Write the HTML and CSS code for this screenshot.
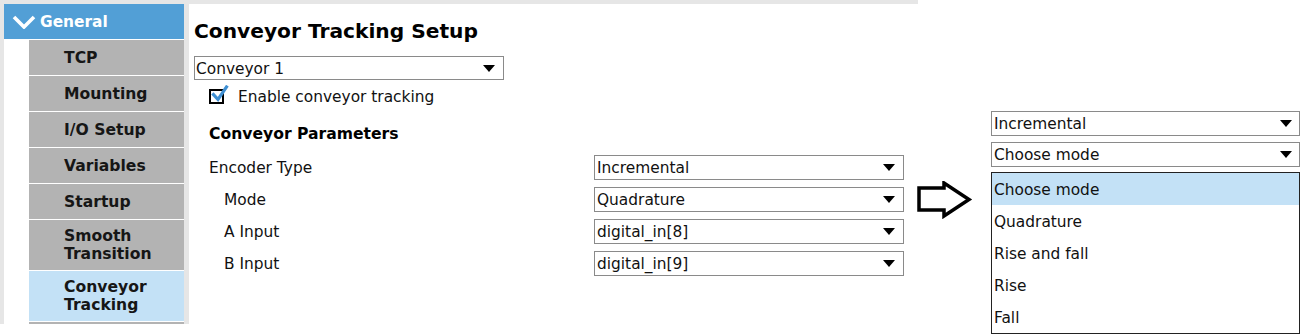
FILE: index.html
```html
<!DOCTYPE html>
<html>
<head>
<meta charset="utf-8">
<link rel="stylesheet" href="styles.css">
</head>
<body>
<div class="page">
  <div class="frame">
    <nav class="sidebar">
      <div class="nav-head">
        <svg class="chev" width="24" height="14" viewBox="0 0 24 14"><path d="M2 2 L12 12 L22 2" fill="none" stroke="#fff" stroke-width="3.6" stroke-linejoin="miter"/></svg>
        <span>General</span>
      </div>
      <div class="nav-item">TCP</div>
      <div class="nav-item">Mounting</div>
      <div class="nav-item">I/O Setup</div>
      <div class="nav-item">Variables</div>
      <div class="nav-item">Startup</div>
      <div class="nav-item tall">Smooth<br>Transition</div>
      <div class="nav-item tall active">Conveyor<br>Tracking</div>
      <div class="nav-item"></div>
    </nav>
    <main class="content">
      <h1 class="title">Conveyor Tracking Setup</h1>
      <div class="dd dd-conv"><span>Conveyor 1</span><i class="tri"></i></div>
      <div class="check-row">
        <span class="box">
          <svg class="tick" width="20" height="20" viewBox="0 0 20 20"><path d="M3.5 9.5 L8 14.5 L16.5 2" fill="none" stroke="#3f8fd2" stroke-width="3.2" stroke-linecap="square"/></svg>
        </span>
        <span class="check-label">Enable conveyor tracking</span>
      </div>
      <h2 class="sub">Conveyor Parameters</h2>
      <div class="params">
        <div class="lbl">Encoder Type</div>
        <div class="dd"><span>Incremental</span><i class="tri"></i></div>
        <div class="lbl ind">Mode</div>
        <div class="dd"><span>Quadrature</span><i class="tri"></i></div>
        <div class="lbl ind">A Input</div>
        <div class="dd"><span>digital_in[8]</span><i class="tri"></i></div>
        <div class="lbl ind">B Input</div>
        <div class="dd"><span>digital_in[9]</span><i class="tri"></i></div>
      </div>
    </main>
  </div>
  <div class="arrow-col">
    <svg width="56" height="38" viewBox="0 0 56 38"><path d="M2 7 L27 7 L27 2 L52 18.5 L27 35 L27 29 L2 29 Z" fill="#fff" stroke="#000" stroke-width="3.5" stroke-linejoin="miter"/></svg>
  </div>
  <div class="panel">
    <div class="dd"><span>Incremental</span><i class="tri"></i></div>
    <div class="dd dd-mode"><span>Choose mode</span><i class="tri"></i></div>
    <ul class="list">
      <li class="sel">Choose mode</li>
      <li>Quadrature</li>
      <li>Rise and fall</li>
      <li>Rise</li>
      <li>Fall</li>
    </ul>
  </div>
</div>
</body>
</html>
```

FILE: styles.css
```css
* { box-sizing: border-box; }
html, body { margin: 0; padding: 0; background: #fff; }
body {
  font-family: "DejaVu Sans", "Liberation Sans", sans-serif;
  font-size: 15.4px;
  color: #111;
}
.page {
  display: flex;
  align-items: flex-start;
  width: 1306px;
  height: 334px;
  overflow: hidden;
}
.frame {
  width: 918px;
  height: 324px;
  flex: none;
  background: #e6e6e6;
  padding: 4px 0 0 4px;
  display: flex;
  gap: 5px;
}
.sidebar {
  width: 180px;
  height: 320px;
  background: #fff;
  overflow: hidden;
  flex: none;
}
.nav-head {
  height: 35px;
  background: #529fd6;
  color: #fff;
  font-weight: bold;
  display: flex;
  align-items: center;
  margin-bottom: 1px;
}
.chev { margin-left: 8px; margin-right: 4px; margin-top: 1px; }
.nav-item {
  margin-left: 25px;
  height: 35px;
  margin-bottom: 1px;
  background: #b3b3b3;
  font-weight: bold;
  font-size: 15.6px;
  padding-left: 35px;
  display: flex;
  align-items: center;
  line-height: 18px;
  color: #161616;
}
.nav-item.tall { height: 50px; }
.nav-item.active { background: #c3e1f6; }
.content {
  flex: 1;
  height: 320px;
  background: #fff;
  padding: 15px 0 0 5px;
}
.title {
  margin: 0;
  font-size: 20.2px;
  line-height: 24px;
  font-weight: bold;
  color: #000;
}
.dd {
  height: 25px;
  border: 1px solid #8a8a8a;
  background: #fff;
  display: flex;
  align-items: center;
  justify-content: space-between;
  padding: 1px 8px 0 2px;
  color: #111;
  white-space: nowrap;
}
.tri {
  width: 0;
  height: 0;
  border-left: 6px solid transparent;
  border-right: 6px solid transparent;
  border-top: 7px solid #000;
  margin-top: -1px;
}
.dd-conv {
  width: 310px;
  height: 24px;
  margin-top: 13px;
  padding-left: 1px;
}
.check-row {
  display: flex;
  align-items: center;
  height: 15px;
  margin-top: 9px;
  padding-left: 15px;
}
.box {
  position: relative;
  width: 15px;
  height: 15px;
  border: 2px solid #000;
  flex: none;
}
.tick { position: absolute; left: -1px; top: -6px; }
.check-label { margin-left: 14px; line-height: 15px; padding-top: 2px; }
.sub {
  margin: 21px 0 0 15px;
  font-size: 15.6px;
  line-height: 18px;
  font-weight: bold;
  color: #000;
}
.params {
  margin-top: 12px;
  margin-left: 15px;
  display: grid;
  grid-template-columns: 385px 310px;
  grid-auto-rows: 25px;
  row-gap: 7px;
}
.lbl { display: flex; align-items: center; padding-top: 1px; }
.lbl.ind { padding-left: 15px; }
.arrow-col {
  width: 73px;
  flex: none;
  padding-top: 181px;
  padding-left: 0;
}
.arrow-col svg { display: block; margin-left: -1px; }
.panel {
  width: 309px;
  flex: none;
  margin-top: 111px;
}
.panel .dd { height: 25px; padding-right: 7px; }
.dd-mode { margin-top: 6px; }
.list {
  list-style: none;
  margin: 5px 0 0 0;
  padding: 0;
  border: 1px solid #222;
  background: #fff;
}
.list li {
  height: 32px;
  display: flex;
  align-items: center;
  padding: 1px 0 0 2px;
  color: #111;
}
.list li.sel { background: #c3e1f6; }
```
